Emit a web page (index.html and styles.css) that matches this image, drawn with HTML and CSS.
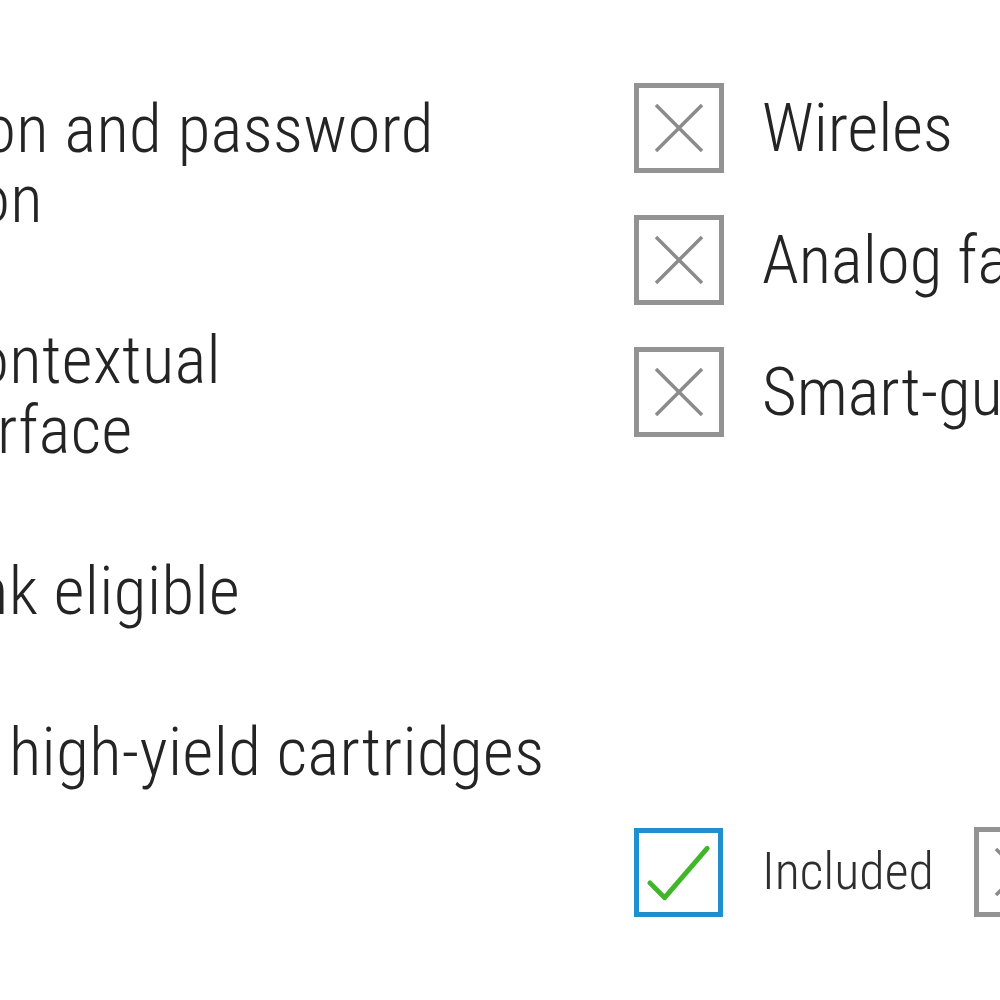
FILE: index.html
```html
<!DOCTYPE html>
<html lang="en">
<head>
<meta charset="utf-8">
<title>Printer feature comparison</title>
<link rel="stylesheet" href="styles.css">
</head>
<body>
<main class="page">
  <section class="features">
    <div class="feature">
      <div class="line l1">on and password</div>
      <div class="line l2">on</div>
    </div>
    <div class="feature">
      <div class="line l3">ontextual</div>
      <div class="line l4">rface</div>
    </div>
    <div class="feature">
      <div class="line l5">nk eligible</div>
    </div>
    <div class="feature">
      <div class="line l6">high-yield cartridges</div>
    </div>
  </section>

  <section class="compare">
    <ul class="checks">
      <li class="check-row">
        <span class="box box-no">
          <svg viewBox="0 0 80 80" class="ico"><path d="M17 17 L63 63 M63 17 L17 63"/></svg>
        </span>
        <span class="check-label">Wireles</span>
      </li>
      <li class="check-row">
        <span class="box box-no">
          <svg viewBox="0 0 80 80" class="ico"><path d="M17 17 L63 63 M63 17 L17 63"/></svg>
        </span>
        <span class="check-label">Analog fa</span>
      </li>
      <li class="check-row">
        <span class="box box-no">
          <svg viewBox="0 0 80 80" class="ico"><path d="M17 17 L63 63 M63 17 L17 63"/></svg>
        </span>
        <span class="check-label">Smart-gu</span>
      </li>
    </ul>

    <div class="legend">
      <span class="box box-yes">
        <svg viewBox="0 0 80 80" class="ico ico-check"><path d="M11 50 L26 65 L69 15"/></svg>
      </span>
      <span class="legend-label">Included</span>
      <span class="box box-no">
        <svg viewBox="0 0 80 80" class="ico"><path d="M17 17 L63 63 M63 17 L17 63"/></svg>
      </span>
    </div>
  </section>
</main>
</body>
</html>
```
FILE: styles.css
```css
html, body {
  margin: 0;
  padding: 0;
  background: #ffffff;
}

body {
  width: 1000px;
  height: 1000px;
  overflow: hidden;
  font-family: "Roboto Condensed", "Roboto", "Liberation Sans", sans-serif;
  font-weight: 300;
  color: #242424;
}

.page {
  display: grid;
  grid-template-columns: 634px 366px;
  height: 1000px;
  overflow: hidden;
}

/* left column: feature names, cut at the left edge */
.features {
  padding-top: 94px;
  overflow: hidden;
}

.feature {
  margin-bottom: 91px;
}

.line {
  font-size: 67px;
  line-height: 70px;
  letter-spacing: 0.4px;
  white-space: nowrap;
}

.l1 { text-indent: -17px; }
.l2 { text-indent: -23px; }
.l3 { text-indent: -24px; }
.l4 { text-indent: -3px; }
.l5 { text-indent: -24px; }
.l6 { text-indent: 9px; }

/* right column */
.compare {
  display: flex;
  flex-direction: column;
  padding-top: 83px;
  overflow: hidden;
}

.checks {
  list-style: none;
  margin: 0;
  padding: 0;
  display: flex;
  flex-direction: column;
  gap: 42px;
}

.check-row {
  display: flex;
  align-items: center;
  gap: 38px;
  height: 90px;
  white-space: nowrap;
}

.check-label {
  font-size: 67px;
  line-height: 67px;
}

.box {
  flex: none;
  box-sizing: border-box;
  width: 90px;
  height: 90px;
  border: 5px solid #939393;
  display: flex;
}

.box-yes {
  border-color: #1f8fcf;
  width: 89px;
  height: 89px;
}

.ico {
  width: 80px;
  height: 80px;
  fill: none;
  stroke: #8b8b8b;
  stroke-width: 3.5;
}

.ico-check {
  stroke: #42b62a;
  stroke-width: 5;
  stroke-linecap: round;
  stroke-linejoin: round;
}

.legend {
  margin-top: 390px;
  display: flex;
  align-items: center;
  white-space: nowrap;
}

.legend-label {
  font-size: 52px;
  line-height: 52px;
  color: #2e2e2e;
  margin-left: 39px;
  margin-right: 40px;
}
```
